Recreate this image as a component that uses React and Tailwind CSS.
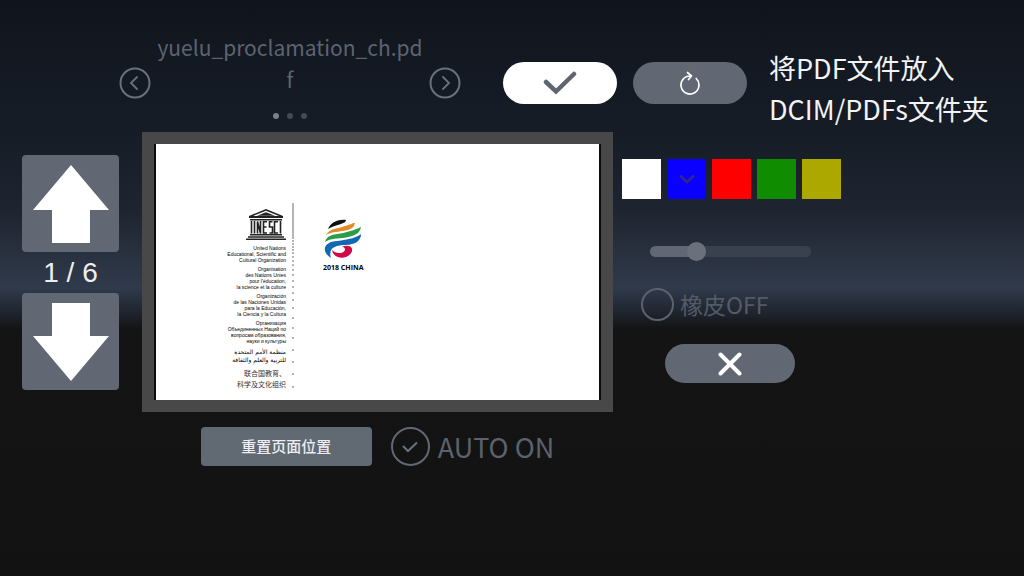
import React, { useState } from 'react';

const swatches = [
  { name: 'white', className: 'bg-white' },
  { name: 'blue', className: 'bg-[#0a00ff]' },
  { name: 'red', className: 'bg-[#ff0000]' },
  { name: 'green', className: 'bg-[#108c00]' },
  { name: 'yellow', className: 'bg-[#aca800]' },
];

const orgNames = [
  ['United Nations', 'Educational, Scientific and', 'Cultural Organization'],
  ['Organisation', 'des Nations Unies', "pour l'éducation,", 'la science et la culture'],
  ['Organización', 'de las Naciones Unidas', 'para la Educación,', 'la Ciencia y la Cultura'],
  ['Организация', 'Объединенных Наций по', 'вопросам образования,', 'науки и культуры'],
];

// The dots get further apart towards the bottom of the page
const dots = [
  1, 3, 5, 7, 9, 11, 13, 15, 17, 19, 21, 23, 25, 27, 29, 31, 33, 35, 38, 41, 44, 47, 50, 54, 58, 62,
  67, 72, 78, 84, 90, 97, 105, 115, 125, 135, 147, 159, 171, 184,
];

const Chevron = ({ d }) => (
  <svg viewBox="0 0 32 32" className="size-8" fill="none" stroke="currentColor" strokeWidth="2">
    <circle cx="16" cy="16" r="14.5" />
    <path d={d} strokeLinecap="round" strokeWidth="1.8" />
  </svg>
);

const BigArrow = ({ className }) => (
  <svg viewBox="0 0 76 78" className={className} fill="white">
    <path d="M38 0 76 45H57V78H19V45H0Z" />
  </svg>
);

const Temple = () => (
  <svg viewBox="0 0 40 32" className="h-8 w-10" fill="#222">
    <path d="M20 0 37 7V9H3V7ZM20 1.8 7 7H33Z" fillRule="evenodd" />
    <path d="M20 3.2 29 6.8H11Z" />
    <path d="M4 10h32v1.6H4ZM4 25h32v1.4H4ZM2 27.2h36v1.5H2ZM0 29.5h40V31H0Z" />
    <path
      d="M5.5 12v12.5M8.500 12v12.5M11.500 24.5V12.5L14.500 24.5V12M21 12.8h-3.500v11.2H21M17.500 18H20.500M26.500 12.800h-3v5.200h3v6h-3M32 12.800h-3.500v11.200h3.500M34.500 12v12.500"
      fill="none"
      stroke="#222"
      strokeWidth="1.6"
    />
  </svg>
);

const FlameLogo = () => (
  <svg viewBox="0 0 38 40" className="h-10 w-[38px]">
    <path d="M4 10C6 5 12 0 22 1C22 5 13 5 4 10Z" fill="#111" />
    <path d="M2 16C6 9 14 10 21 7C26 6 28 4 31 4C30 9 26 11 19 12C12 13 7 13 2 16Z" fill="#e38a25" />
    <path d="M1 23C4 14 13 16 21 13.500C29 11.500 33 10 37 8C36 14 31 17 22 18.500C13 20 7 19 1 23Z" fill="#2b9c48" />
    <path d="M7 39C-2 33 -1 25 9 22.500C20 21 31 20 37 15C37 22 31 25.500 22 26C11 26 4 29 7 39Z" fill="#1268b3" />
    <path d="M8 31C11 34.500 17 35 20 32.500C22 30.500 21 28.500 18 27.500C25 25.500 29 28 28 32C26 40 10 42 8 31Z" fill="#cf0a46" />
  </svg>
);

const PdfPage = () => (
  <div className="flex h-64 bg-white text-black">
    <div className="flex w-[130px] shrink-0 flex-col items-end pt-[65px] text-right">
      <Temple />
      <div className="mt-1 flex flex-col gap-[3px] text-[5px] leading-[6px] whitespace-nowrap">
        {orgNames.map((lines) => (
          <p key={lines[0]}>
            {lines.map((line) => (
              <span key={line} className="block">{line}</span>
            ))}
          </p>
        ))}
      </div>
      <p dir="rtl" className="mt-1 font-['DejaVu_Sans',sans-serif] text-[6px] leading-[8px] whitespace-nowrap">
        <span className="block text-start">منظمة الأمم المتحدة</span>
        <span className="block text-start">للتربية والعلم والثقافة</span>
      </p>
      <p className="mt-1 font-['Noto_Sans_CJK_SC',sans-serif] text-[7px] leading-[11px] whitespace-nowrap text-[#333]">
        <span className="block">联合国教育、</span>
        <span className="block">科学及文化组织</span>
      </p>
    </div>
    <svg viewBox="0 0 4 190" className="mt-[59px] ml-[5px] h-[190px] w-1 shrink-0" fill="#333">
      {dots.map((y) => (
        <circle key={y} cx="2" cy={y} r="0.7" />
      ))}
    </svg>
    <div className="ml-7 flex flex-col items-center pt-[75px]">
      <FlameLogo />
      <p className="mt-1 font-['Open_Sans',sans-serif] text-[7px] leading-[9px] font-bold whitespace-nowrap">2018 CHINA</p>
    </div>
  </div>
);

const App = () => {
  const [color, setColor] = useState('blue');
  const [size, setSize] = useState(26);
  const [eraser, setEraser] = useState(false);
  const [auto, setAuto] = useState(true);
  const [page, setPage] = useState(1);

  return (
    <main className="min-h-screen bg-[linear-gradient(180deg,#10151d_0%,#161c26_22%,#1f2530_37%,#29313f_44%,#2f3a4b_50%,#202631_54%,#141415_57%,#121212_100%)] pb-6 font-['Liberation_Sans',sans-serif]">
      <header className="flex h-[132px] items-start pl-[119px] font-['Noto_Sans_CJK_SC',sans-serif]">
        <div className="w-[342px] shrink-0 pt-[31px] text-[#5d6370]">
          <div className="flex items-end justify-between">
            <button aria-label="Previous file" className="-mb-1 text-[#6a707c]">
              <Chevron d="M18 10 12 16 18 22" />
            </button>
            <p className="w-[270px] text-center text-[21px] leading-8 break-all">yuelu_proclamation_ch.pdf</p>
            <button aria-label="Next file" className="-mb-1 text-[#6a707c]">
              <Chevron d="M14 10 20 16 14 22" />
            </button>
          </div>
          <div className="mt-[18px] flex justify-center gap-2">
            <span className="size-1.5 rounded-full bg-[#7b808b]" />
            <span className="size-1.5 rounded-full bg-[#454a55]" />
            <span className="size-1.5 rounded-full bg-[#454a55]" />
          </div>
        </div>
        <div className="mt-[62px] ml-[42px] flex gap-4">
          <button aria-label="Open file" className="flex h-[42px] w-[114px] items-center justify-center rounded-full bg-white">
            <svg viewBox="0 0 34 24" className="h-6 w-[34px]" fill="none" stroke="#5f6671" strokeWidth="4.500" strokeLinecap="round">
              <path d="M3 11 13 20.500 31 3" />
            </svg>
          </button>
          <button aria-label="Reload" className="flex h-[42px] w-[114px] items-center justify-center rounded-full bg-[#616873]">
            <svg viewBox="0 0 22 24" className="h-6 w-[22px]" fill="none" stroke="white" strokeWidth="1.700" strokeLinecap="round" strokeLinejoin="round">
              <path d="M17.200 7.500A9 9 0 1 1 11 5M8.500 1.500 12.500 5 9.500 8.500" />
            </svg>
          </button>
        </div>
        <p className="mt-[47px] ml-[22px] text-[27px] leading-[41px] whitespace-nowrap text-[#f2f3f5]">
          将PDF文件放入
          <br />
          DCIM/PDFs文件夹
        </p>
      </header>

      <div className="grid grid-cols-[97px_minmax(0,494fr)_minmax(0,411fr)] pl-[22px]">
        <nav className="flex flex-col pt-[23px]">
          <button
            aria-label="Previous page"
            onClick={() => setPage(Math.max(1, page - 1))}
            className="flex h-[97px] items-center justify-center rounded bg-[#616873]"
          >
            <BigArrow className="h-[78px] w-[76px]" />
          </button>
          <p className="text-center text-[28px] leading-[41px] text-[#eceef1]">{page} / 6</p>
          <button
            aria-label="Next page"
            onClick={() => setPage(Math.min(6, page + 1))}
            className="flex h-[97px] items-center justify-center rounded bg-[#616873]"
          >
            <BigArrow className="h-[78px] w-[76px] rotate-180" />
          </button>
        </nav>

        <section className="ml-[23px]">
          <div className="bg-[#484848] p-3">
            <div className="bg-[#0c0c0e] px-0.5">
              <PdfPage />
            </div>
          </div>
          <div className="mt-[15px] flex items-center justify-center font-['Noto_Sans_CJK_SC',sans-serif]">
            <button className="h-[39px] w-[171px] rounded-sm bg-[#616973] text-[15px] font-medium text-[#eceef1]">重置页面位置</button>
            <label className="ml-[19px] flex items-center gap-2 text-[27px] leading-[39px] text-[#5c626d]">
              <span className="grid size-[39px] place-items-center">
                <input
                  type="checkbox"
                  checked={auto}
                  onChange={(e) => setAuto(e.target.checked)}
                  className="col-start-1 row-start-1 size-[39px] appearance-none rounded-full border-2 border-[#616873]"
                />
                {auto && (
                  <svg viewBox="0 0 16 12" className="pointer-events-none col-start-1 row-start-1 h-3 w-4" fill="none" stroke="#6b717c" strokeWidth="2">
                    <path d="M1 5 6 10 15 1.500" />
                  </svg>
                )}
              </span>
              AUTO ON
            </label>
          </div>
        </section>

        <section className="pt-[27px] pl-[9px]">
          <fieldset className="flex gap-1.5">
            {swatches.map((swatch) => (
              <label key={swatch.name} className="grid place-items-center">
                <input
                  type="radio"
                  name="color"
                  aria-label={swatch.name}
                  checked={color === swatch.name}
                  onChange={() => setColor(swatch.name)}
                  className={`col-start-1 row-start-1 h-10 w-[39px] appearance-none ${swatch.className}`}
                />
                {color === swatch.name && (
                  <svg viewBox="0 0 16 10" className="pointer-events-none col-start-1 row-start-1 h-2.5 w-4" fill="none" stroke="#35258c" strokeWidth="2.500">
                    <path d="M1 1.500 8 8 15 1.500" />
                  </svg>
                )}
              </label>
            ))}
          </fieldset>
          <input
            type="range"
            aria-label="Pen size"
            value={size}
            onChange={(e) => setSize(Number(e.target.value))}
            style={{ backgroundImage: `linear-gradient(to right, #616873 ${size}%, #39414d ${size}%)` }}
            className="mt-[47px] ml-7 block h-[11px] w-[161px] appearance-none rounded-full [&::-webkit-slider-runnable-track]:h-[11px] [&::-webkit-slider-thumb]:-mt-1 [&::-webkit-slider-thumb]:size-[19px] [&::-webkit-slider-thumb]:appearance-none [&::-webkit-slider-thumb]:rounded-full [&::-webkit-slider-thumb]:bg-[#6a717c]"
          />
          <label className="mt-[31px] ml-[19px] flex h-8 w-fit items-center gap-1.5 font-['Noto_Sans_CJK_SC',sans-serif] text-[23px] leading-8 text-[#555b66]">
            <input
              type="checkbox"
              checked={eraser}
              onChange={(e) => setEraser(e.target.checked)}
              className="size-[33px] appearance-none rounded-full border-2 border-[#5c636e] checked:bg-[#5c636e]"
            />
            橡皮OFF
          </label>
          <button aria-label="Close" className="mt-6 ml-[43px] flex h-[39px] w-[130px] items-center justify-center rounded-full bg-[#616873]">
            <svg viewBox="0 0 24 24" className="size-6" fill="none" stroke="white" strokeWidth="4" strokeLinecap="round">
              <path d="M2.500 2.500 21.500 21.500M21.500 2.500 2.500 21.500" />
            </svg>
          </button>
        </section>
      </div>
    </main>
  );
};

export default App;
